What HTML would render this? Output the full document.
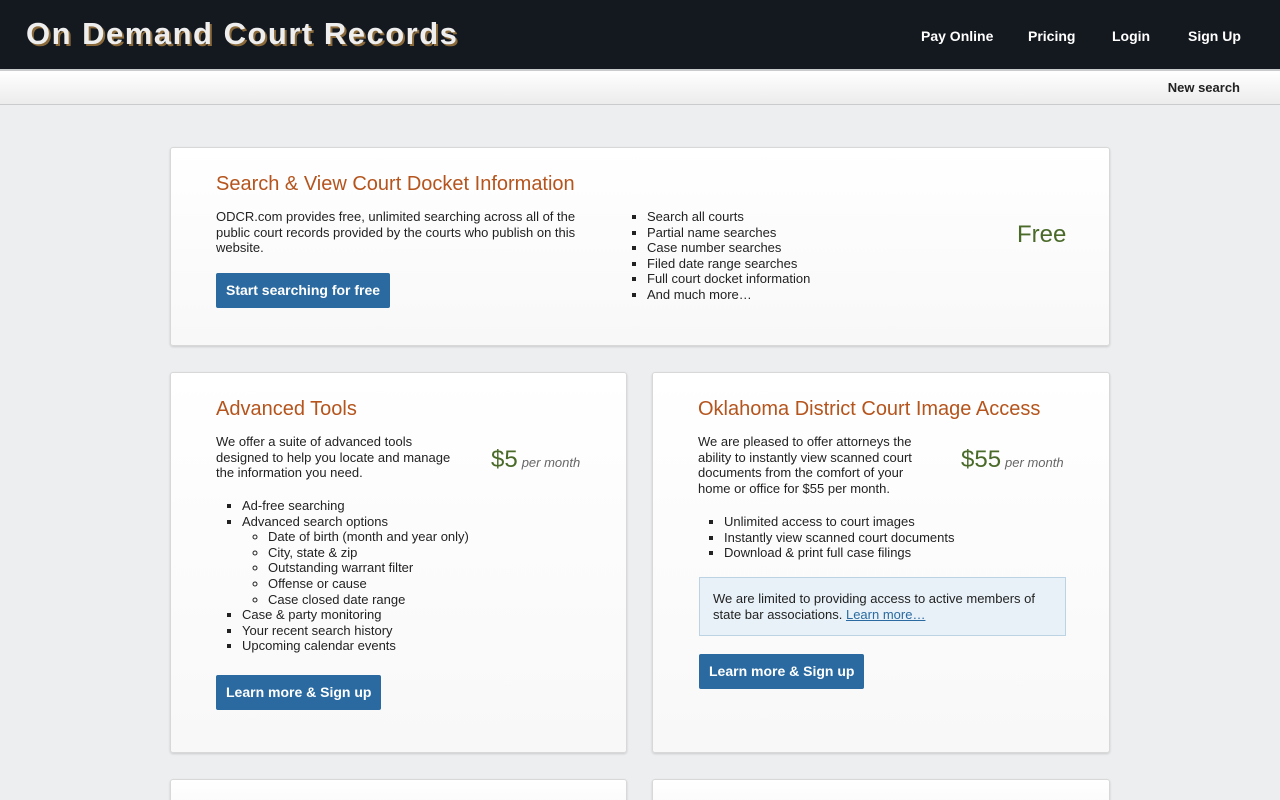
<!DOCTYPE html>
<html style="overflow:hidden;height:800px"><head><style>
*{margin:0;padding:0;box-sizing:border-box}
body{width:1280px;height:800px;overflow:hidden;background:#eceeef;font-family:Arial,"Liberation Sans",Helvetica,sans-serif;font-size:13px;color:#222;position:relative}
.hdr{position:absolute;left:0;top:0;width:1280px;height:69px;background:#14181f}
.logo{position:absolute;left:26px;top:16px;font-size:31px;font-weight:bold;color:#eee;letter-spacing:1.5px;text-shadow:2px 2px 0 #8a6a3a;font-family:Arial,"Liberation Sans",sans-serif;white-space:nowrap}
.nav{position:absolute;top:28px;color:#fff;font-weight:bold;font-size:14px}
.sub{position:absolute;left:0;top:69px;width:1280px;height:36px;background:linear-gradient(#fff,#ececec);border-top:2px solid #c9cbcd;border-bottom:1px solid #c9cbcd}
.sub span{position:absolute;right:40px;top:9px;font-weight:bold;font-size:13px;color:#222}
.card{position:absolute;background:linear-gradient(#fff,#f8f8f8);border:1px solid #d8d8d8;border-radius:3px;box-shadow:0 1px 2px rgba(0,0,0,.15)}
.a{position:absolute;line-height:15.6px}
h2{position:absolute;font-weight:normal;font-size:20px;color:#b5541c}
ul{list-style:square;padding-left:26px;line-height:15.6px}
ul ul{list-style:circle}
.btn{position:absolute;background:#2a6aa0;color:#fff;font-weight:bold;font-size:14px;height:35px;line-height:35px;padding:0 10px;border-radius:2px;white-space:nowrap}
.price{position:absolute;color:#4a6a2a;font-size:24px;white-space:nowrap}
.price i{font-size:13px;color:#666;margin-left:4px}
</style></head><body>
<div class="hdr"><div class="logo">On Demand Court Records</div>
<span class="nav" style="left:921px">Pay Online</span><span class="nav" style="left:1028px">Pricing</span><span class="nav" style="left:1112px">Login</span><span class="nav" style="left:1188px">Sign Up</span></div>
<div class="sub"><span>New search</span></div>

<div class="card" style="left:170px;top:147px;width:940px;height:199px">
<h2 style="left:45px;top:25px">Search &amp; View Court Docket Information</h2>
<div class="a" style="left:45px;top:61px;width:370px">ODCR.com provides free, unlimited searching across all of the public court records provided by the courts who publish on this website.</div>
<div class="btn" style="left:45px;top:125px">Start searching for free</div>
<ul class="a" style="left:450px;top:61px"><li>Search all courts</li><li>Partial name searches</li><li>Case number searches</li><li>Filed date range searches</li><li>Full court docket information</li><li>And much more…</li></ul>
<div class="price" style="left:846px;top:73px">Free</div>
</div>

<div class="card" style="left:170px;top:372px;width:457px;height:381px">
<h2 style="left:45px;top:25px">Advanced Tools</h2>
<div class="a" style="left:45px;top:61px;width:245px">We offer a suite of advanced tools designed to help you locate and manage the information you need.</div>
<div class="price" style="left:320px;top:73px">$5<i>per month</i></div>
<ul class="a" style="left:45px;top:125px"><li>Ad-free searching</li><li>Advanced search options<ul><li>Date of birth (month and year only)</li><li>City, state &amp; zip</li><li>Outstanding warrant filter</li><li>Offense or cause</li><li>Case closed date range</li></ul></li><li>Case &amp; party monitoring</li><li>Your recent search history</li><li>Upcoming calendar events</li></ul>
<div class="btn" style="left:45px;top:302px">Learn more &amp; Sign up</div>
</div>

<div class="card" style="left:652px;top:372px;width:458px;height:381px">
<h2 style="left:45px;top:25px">Oklahoma District Court Image Access</h2>
<div class="a" style="left:45px;top:61px;width:225px">We are pleased to offer attorneys the ability to instantly view scanned court documents from the comfort of your home or office for $55 per month.</div>
<div class="price" style="left:308px;top:73px">$55<i>per month</i></div>
<ul class="a" style="left:45px;top:141px"><li>Unlimited access to court images</li><li>Instantly view scanned court documents</li><li>Download &amp; print full case filings</li></ul>
<div class="a" style="left:46px;top:204px;width:367px;height:59px;background:#e8f1f8;border:1px solid #bcd3e4;padding:13px 13px">We are limited to providing access to active members of state bar associations. <u style="color:#2a6aa0">Learn more…</u></div>
<div class="btn" style="left:46px;top:281px">Learn more &amp; Sign up</div>
</div>

<div class="card" style="left:170px;top:779px;width:457px;height:40px"></div>
<div class="card" style="left:652px;top:779px;width:458px;height:40px"></div>
</body></html>
